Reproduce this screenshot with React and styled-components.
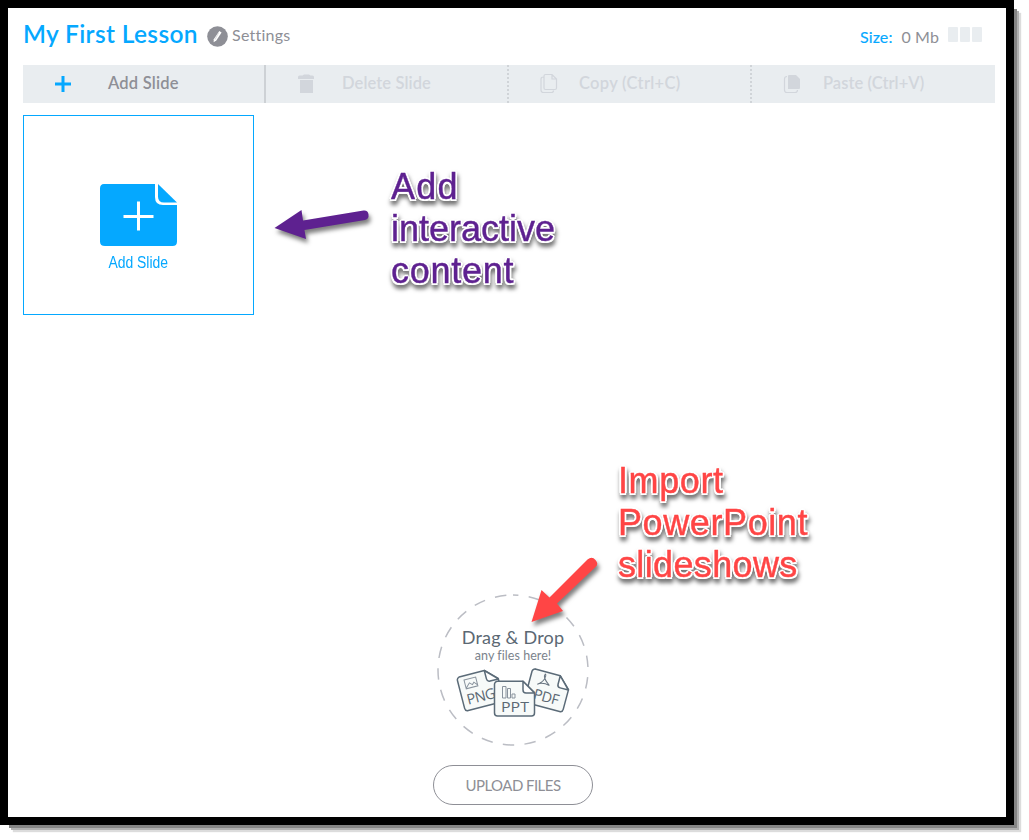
import React from "react";
import styled, { createGlobalStyle } from "styled-components";

const Global = createGlobalStyle`
  *, *::before, *::after { box-sizing: border-box; }
  body { margin: 0; background: #fff; }
`;

const Page = styled.div`
  width: 1029px;
  height: 840px;
  overflow: hidden;
  background: #fff;
`;

const Window = styled.div`
  position: relative;
  display: flex;
  flex-direction: column;
  width: 1014px;
  height: 825px;
  padding: 0 11px 12px 15px;
  border: 8px solid #000;
  background: #fff;
  font-family: Lato, "Open Sans", sans-serif;
  font-variant-ligatures: none;
  color: #8e8f96;
  box-shadow: 6px 6px 0 -3px #858585, 8px 8px 0 -3px #b0b0b0, 10px 10px 1px -3px #dcdcdc;
`;

const Header = styled.header`
  display: flex;
  justify-content: space-between;
  height: 57px;
`;

const HeaderGroup = styled.div`
  display: flex;
  align-items: flex-start;
`;

const Title = styled.h1`
  margin: 12px 0 0;
  width: 184px;
  font-size: 24.5px;
  line-height: 28px;
  font-weight: 600;
  letter-spacing: 0.35px;
  white-space: nowrap;
  color: #05a8ff;
`;

const EditIcon = styled.svg`
  width: 21px;
  height: 21px;
  margin-top: 18px;
`;

const Settings = styled.span`
  margin: 17px 0 0 4px;
  font-size: 16px;
  line-height: 20px;
  letter-spacing: 0.25px;
`;

const Size = styled.div`
  display: flex;
  gap: 9px;
  margin: 19px 9px 0 0;
  font-size: 16px;
  line-height: 20px;
  letter-spacing: 0.1px;
`;

const SizeLabel = styled.span`
  color: #05a8ff;
  -webkit-text-stroke: 0.15px #05a8ff;
`;

const Meter = styled.div`
  display: flex;
  gap: 2px;
  margin: 19px 13px 0 0;
`;

const MeterBlock = styled.span`
  width: 10px;
  height: 15px;
  border-radius: 1px;
  background: #e9edf0;
`;

const Toolbar = styled.nav`
  display: grid;
  grid-template-columns: repeat(4, 243px);
  height: 38px;
  flex: none;
  background: #e9edf0;
`;

const Tool = styled.div`
  display: flex;
  align-items: flex-start;
  padding-left: 30px;
  border-right: ${(p) => p.$divider || "0"};
  font-size: 16.5px;
  line-height: 20px;
  font-weight: 600;
  color: ${(p) => (p.$active ? "#8e8f96" : "#d2d6dc")};
`;

const ToolIcon = styled.svg`
  flex: none;
  width: 20px;
  height: 22px;
  margin-top: 8px;
`;

const ToolLabel = styled.span`
  margin: 8px 0 0 ${(p) => p.$gap}px;
  letter-spacing: ${(p) => p.$track || 0}px;
  white-space: nowrap;
`;

const Slides = styled.main`
  flex: 1;
  padding-top: 12px;
`;

const SlideCard = styled.div`
  display: flex;
  flex-direction: column;
  align-items: center;
  width: 231px;
  height: 200px;
  padding-top: 68px;
  border: 1px solid #05a8ff;
`;

const SlideIcon = styled.svg`
  width: 77px;
  height: 62px;
`;

const SlideLabel = styled.span`
  margin: 7px 0 0;
  font: 16px/20px "Liberation Sans", Arial, sans-serif;
  color: #05a8ff;
  transform: scaleX(0.87);
`;

const Upload = styled.section`
  display: flex;
  flex-direction: column;
  align-items: center;
  width: 160px;
  margin-left: 410px;
`;

const DropZone = styled.div`
  display: grid;
  width: 152px;
  height: 152px;
  margin-bottom: 19px;
`;

const DropArt = styled.svg`
  grid-area: 1 / 1;
  width: 152px;
  height: 152px;
`;

const DropText = styled.div`
  grid-area: 1 / 1;
  padding-top: 32px;
  text-align: center;
  white-space: nowrap;
`;

const DropTitle = styled.div`
  font-size: 18px;
  line-height: 23px;
  letter-spacing: 0.2px;
  color: #5b6873;
`;

const DropHint = styled.div`
  font-size: 12.5px;
  line-height: 14px;
  letter-spacing: 0.05px;
  color: #7b838c;
`;

const UploadButton = styled.button`
  width: 160px;
  height: 40px;
  padding: 0 0 1px;
  border: 1px solid #8e8f96;
  border-radius: 20px;
  background: #fff;
  color: #8e8f96;
  font: 15px/20px Lato, sans-serif;
  letter-spacing: -0.55px;
`;

const Note = styled.p`
  position: absolute;
  left: ${(p) => p.$x}px;
  top: ${(p) => p.$y}px;
  display: flex;
  flex-direction: column;
  margin: 0;
  font: 36px/42px "Liberation Sans", Arial, sans-serif;
  white-space: nowrap;
  color: ${(p) => p.$color};
  -webkit-text-stroke: 0.4px ${(p) => p.$color};
  text-shadow: 2px 0 #fff, -2px 0 #fff, 0 2px #fff, 0 -2px #fff,
    1.5px 1.5px #fff, -1.5px 1.5px #fff, 1.5px -1.5px #fff, -1.5px -1.5px #fff;
  filter: drop-shadow(1px 4px 2px rgba(0, 0, 0, 0.55));
`;

const NoteLine = styled.span`
  letter-spacing: ${(p) => p.$track}px;
`;

const Arrow = styled.svg`
  position: absolute;
  left: ${(p) => p.$x}px;
  top: ${(p) => p.$y}px;
  width: 120px;
  height: 90px;
  overflow: visible;
  filter: drop-shadow(2px 4px 2px rgba(0, 0, 0, 0.5));
`;

const FileName = styled.text`
  font-family: "Open Sans", sans-serif;
  font-size: 14.5px;
  fill: #5b6873;
`;

const PageOutline = () => (
  <>
    <path d="M3 0.8H29L40.5 12V32.5a3 3 0 0 1-3 3H3.5a3 3 0 0 1-3-3V3.8a3 3 0 0 1 3-3Z" fill="#f7faf9" stroke="#5b6b78" strokeWidth="1.5" strokeLinejoin="round" />
    <path d="M29 0.8V9.5q0 3 3 3H40.5Z" fill="#fff" stroke="#5b6b78" strokeWidth="1.5" strokeLinejoin="round" />
  </>
);

export default function App() {
  return (
    <Page>
      <Global />
      <Window>
        <Header>
          <HeaderGroup>
            <Title>My First Lesson</Title>
            <EditIcon viewBox="0 0 21 21">
              <circle cx="10.5" cy="10.5" r="10.3" fill="#8e8f96" />
              <path d="M12.3 5.1 14.6 6.5 9.3 14.5 6.6 16.2 6.8 13.3Z" fill="#fff" />
              <path d="M11.5 7 8 13.7" stroke="#c5c6ca" strokeWidth=".6" />
            </EditIcon>
            <Settings>Settings</Settings>
          </HeaderGroup>
          <HeaderGroup>
            <Size>
              <SizeLabel>Size:</SizeLabel>
              <span>0 Mb</span>
            </Size>
            <Meter>
              <MeterBlock />
              <MeterBlock />
              <MeterBlock />
            </Meter>
          </HeaderGroup>
        </Header>

        <Toolbar>
          <Tool $active $divider="2px solid #cdd1d5">
            <ToolIcon viewBox="0 0 20 22">
              <path d="M10 3v16M2 11h16" stroke="#05a8ff" strokeWidth="3" />
            </ToolIcon>
            <ToolLabel $gap={35} $track={0.2}>Add Slide</ToolLabel>
          </Tool>
          <Tool $divider="2px dotted #d0d4d8">
            <ToolIcon viewBox="0 0 20 22">
              <path d="M2 4q0-1.5 1.5-1.5h3l1.5-1h5l1.5 1h2q1.5 0 1.5 1.5V6H2ZM4 7h13V20H4Z" fill="#d2d6dc" />
            </ToolIcon>
            <ToolLabel $gap={26} $track={0.1}>Delete Slide</ToolLabel>
          </Tool>
          <Tool $divider="2px dotted #d0d4d8">
            <ToolIcon viewBox="0 0 20 22">
              <path d="M6.5 1.5H13L17.5 6v9q0 1.5-1.5 1.5H6.5Q5 16.5 5 15V3q0-1.5 1.5-1.5ZM13 1.5V6h4.5M4.5 4Q2 4 2 6v11q0 2.5 2.5 2.5h8q2 0 2-2" fill="none" stroke="#d2d6dc" strokeWidth="1.2" />
            </ToolIcon>
            <ToolLabel $gap={20} $track={0.3}>Copy (Ctrl+C)</ToolLabel>
          </Tool>
          <Tool>
            <ToolIcon viewBox="0 0 20 22">
              <path d="M7 2h7l4 4V15q0 1-1 1H6V3q0-1 1-1Z" fill="#d2d6dc" />
              <path d="M5 3.5Q2.5 3.5 2.5 6v11q0 2.5 2.5 2.5h8q2.5 0 2.5-2.5" fill="none" stroke="#d2d6dc" strokeWidth="1.2" />
            </ToolIcon>
            <ToolLabel $gap={21} $track={0.05}>Paste (Ctrl+V)</ToolLabel>
          </Tool>
        </Toolbar>

        <Slides>
          <SlideCard>
            <SlideIcon viewBox="0 0 77 62">
              <path d="M4 0H55V13q0 8 8 8H77V57.5Q77 62 72.5 62H5Q0 62 0 57.5V4.5Q0 0 4 0Z" fill="#05a8ff" />
              <path d="M58 0 77 18.5H64q-6 0-6-6Z" fill="#05a8ff" />
              <path d="M38.5 17.5v29M23.5 32.5h30" stroke="#fff" strokeWidth="3" />
            </SlideIcon>
            <SlideLabel>Add Slide</SlideLabel>
          </SlideCard>
        </Slides>

        <Upload>
          <DropZone>
            <DropArt viewBox="0 0 152 152">
              <circle cx="76" cy="76" r="75" fill="none" stroke="#bbbdc4" strokeWidth="1.5" strokeDasharray="11.5 10.32" strokeDashoffset="6" transform="rotate(-90 76 76)" />
              <g transform="translate(19 83) rotate(-14.5)">
                <PageOutline />
                <path d="M7 5h12v9H7ZM7.5 13l4-4 2.5 2.5 2-2 3 3.5" fill="none" stroke="#89939d" />
                <FileName x="5" y="30" textLength="29">PNG</FileName>
              </g>
              <g transform="translate(95.5 73.5) rotate(15)">
                <PageOutline />
                <path d="M9 15Q15 11 15 5q0-2-1-2-2 4 7 10M9 15q4-4 12-2" fill="none" stroke="#66737f" />
                <FileName x="8" y="30" textLength="26">PDF</FileName>
              </g>
              <g transform="translate(57 86.5)">
                <PageOutline />
                <path d="M8.5 17.5V6h3.5v11.5ZM13.5 17.5V8h3v9.5ZM18 17.5v-4h3v4Z" fill="none" stroke="#89939d" />
                <FileName x="7" y="31.5" textLength="28" lengthAdjust="spacingAndGlyphs">PPT</FileName>
              </g>
            </DropArt>
            <DropText>
              <DropTitle>Drag &amp; Drop</DropTitle>
              <DropHint>any files here!</DropHint>
            </DropText>
          </DropZone>
          <UploadButton>UPLOAD FILES</UploadButton>
        </Upload>

        <Arrow $x={260} $y={192} viewBox="0 0 120 90">
          <path d="M6.5 28 33.5 10 35 20.5 95.5 10.5Q100 10 100.5 14.5T97 20L36.5 30 38 39Z" fill="#5e2190" />
        </Arrow>
        <Note $x={383} $y={158} $color="#5e2190">
          <NoteLine $track={1.2}>Add</NoteLine>
          <NoteLine $track={0}>interactive</NoteLine>
          <NoteLine $track={0.75}>content</NoteLine>
        </Note>
        <Arrow $x={519} $y={547} viewBox="0 0 120 90">
          <path d="M4.5 67 14.5 35 22.5 42.5 60.5 4.5Q65 1 68.5 5T68.5 12L30 48.5 36 56Z" fill="#ff4545" />
        </Arrow>
        <Note $x={610} $y={452} $color="#ff4545">
          <NoteLine $track={0.6}>Import</NoteLine>
          <NoteLine $track={0.6}>PowerPoint</NoteLine>
          <NoteLine $track={0.35}>slideshows</NoteLine>
        </Note>
      </Window>
    </Page>
  );
}
